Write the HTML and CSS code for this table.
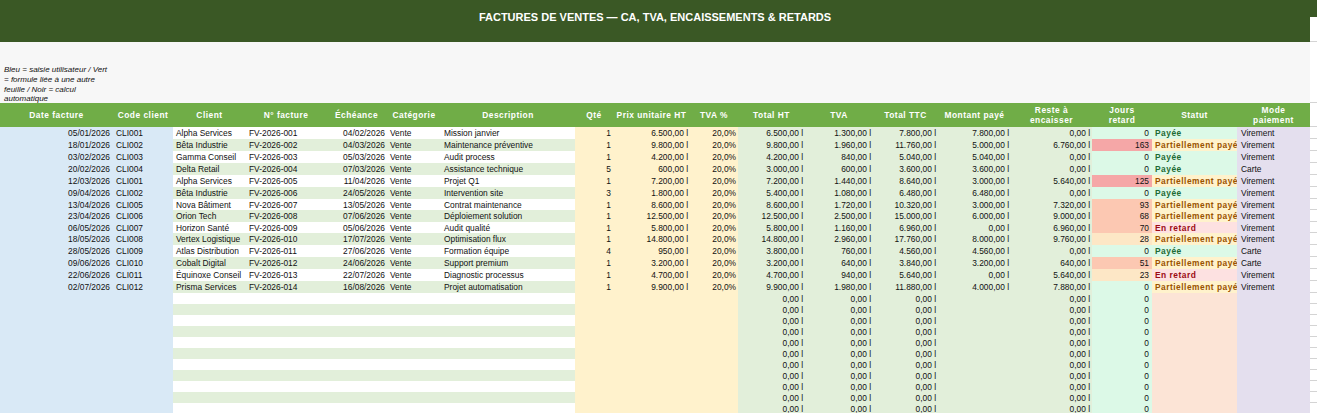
FILE: index.html
```html
<!DOCTYPE html>
<html lang="fr">
<head>
<meta charset="utf-8">
<title>Factures de ventes</title>
<link rel="stylesheet" href="styles.css">
</head>
<body>
<div class="sheet">
  <div class="toprow">
    <div class="banner">FACTURES DE VENTES — CA, TVA, ENCAISSEMENTS &amp; RETARDS</div>
    <div class="gutter gutter-top"></div>
  </div>
  <div class="legendrow">
    <div class="legend"><p class="legend-text">Bleu = saisie utilisateur / Vert = formule liée à une autre feuille / Noir = calcul automatique</p></div>
    <div class="gutter gutter-legend"></div>
  </div>
  <table class="grid">
    <colgroup>
      <col style="width:113px"><col style="width:60px"><col style="width:73px"><col style="width:80px">
      <col style="width:61px"><col style="width:54px"><col style="width:134px"><col style="width:38px">
      <col style="width:77px"><col style="width:48px"><col style="width:67px"><col style="width:68px">
      <col style="width:65px"><col style="width:73px"><col style="width:81px"><col style="width:60px">
      <col style="width:85px"><col style="width:73px"><col style="width:7px">
    </colgroup>
    <thead>
      <tr class="head">
        <th>Date facture</th><th>Code client</th><th>Client</th><th>N° facture</th><th>Échéance</th><th>Catégorie</th>
        <th>Description</th><th>Qté</th><th>Prix unitaire HT</th><th>TVA %</th><th>Total HT</th><th>TVA</th>
        <th>Total TTC</th><th>Montant payé</th><th>Reste à<br>encaisser</th><th>Jours<br>retard</th><th>Statut</th>
        <th>Mode<br>paiement</th><th class="gut"></th>
      </tr>
    </thead>
    <tbody id="rows"></tbody>
  </table>
</div>
<script src="app.js"></script>
</body>
</html>
```
FILE: app.js
```js
const data = [
  ["05/01/2026","CLI001","Alpha Services","FV-2026-001","04/02/2026","Mission janvier","1","6.500,00 l","6.500,00 l","1.300,00 l","7.800,00 l","7.800,00 l","0,00 l","0","paid","Virement"],
  ["18/01/2026","CLI002","Bêta Industrie","FV-2026-002","04/03/2026","Maintenance préventive","1","9.800,00 l","9.800,00 l","1.960,00 l","11.760,00 l","5.000,00 l","6.760,00 l","163","part","Virement"],
  ["03/02/2026","CLI003","Gamma Conseil","FV-2026-003","05/03/2026","Audit process","1","4.200,00 l","4.200,00 l","840,00 l","5.040,00 l","5.040,00 l","0,00 l","0","paid","Virement"],
  ["20/02/2026","CLI004","Delta Retail","FV-2026-004","07/03/2026","Assistance technique","5","600,00 l","3.000,00 l","600,00 l","3.600,00 l","3.600,00 l","0,00 l","0","paid","Carte"],
  ["12/03/2026","CLI001","Alpha Services","FV-2026-005","11/04/2026","Projet Q1","1","7.200,00 l","7.200,00 l","1.440,00 l","8.640,00 l","3.000,00 l","5.640,00 l","125","part","Virement"],
  ["09/04/2026","CLI002","Bêta Industrie","FV-2026-006","24/05/2026","Intervention site","3","1.800,00 l","5.400,00 l","1.080,00 l","6.480,00 l","6.480,00 l","0,00 l","0","paid","Virement"],
  ["13/04/2026","CLI005","Nova Bâtiment","FV-2026-007","13/05/2026","Contrat maintenance","1","8.600,00 l","8.600,00 l","1.720,00 l","10.320,00 l","3.000,00 l","7.320,00 l","93","part","Virement"],
  ["23/04/2026","CLI006","Orion Tech","FV-2026-008","07/06/2026","Déploiement solution","1","12.500,00 l","12.500,00 l","2.500,00 l","15.000,00 l","6.000,00 l","9.000,00 l","68","part","Virement"],
  ["06/05/2026","CLI007","Horizon Santé","FV-2026-009","05/06/2026","Audit qualité","1","5.800,00 l","5.800,00 l","1.160,00 l","6.960,00 l","0,00 l","6.960,00 l","70","late","Virement"],
  ["18/05/2026","CLI008","Vertex Logistique","FV-2026-010","17/07/2026","Optimisation flux","1","14.800,00 l","14.800,00 l","2.960,00 l","17.760,00 l","8.000,00 l","9.760,00 l","28","part","Virement"],
  ["28/05/2026","CLI009","Atlas Distribution","FV-2026-011","27/06/2026","Formation équipe","4","950,00 l","3.800,00 l","760,00 l","4.560,00 l","4.560,00 l","0,00 l","0","paid","Carte"],
  ["09/06/2026","CLI010","Cobalt Digital","FV-2026-012","24/06/2026","Support premium","1","3.200,00 l","3.200,00 l","640,00 l","3.840,00 l","3.200,00 l","640,00 l","51","part","Carte"],
  ["22/06/2026","CLI011","Équinoxe Conseil","FV-2026-013","22/07/2026","Diagnostic processus","1","4.700,00 l","4.700,00 l","940,00 l","5.640,00 l","0,00 l","5.640,00 l","23","late","Virement"],
  ["02/07/2026","CLI012","Prisma Services","FV-2026-014","16/08/2026","Projet automatisation","1","9.900,00 l","9.900,00 l","1.980,00 l","11.880,00 l","4.000,00 l","7.880,00 l","0","part","Virement"]
];
const labels = { paid: "Payée", part: "Partiellement payé", late: "En retard" };
function daysClass(n) {
  n = Number(n);
  if (n > 120) return "d-high";
  if (n >= 30) return "d-mid";
  if (n > 0) return "d-low";
  return "";
}
const tbody = document.getElementById("rows");
let html = "";
data.forEach((r, i) => {
  const short = (i === 6 || i === 8) ? " short" : "";
  html += `<tr class="row ${i % 2 ? "alt" : ""}${short}">` +
    `<td class="c-in r">${r[0]}</td><td class="c-in">${r[1]}</td>` +
    `<td class="c-st">${r[2]}</td><td class="c-st">${r[3]}</td><td class="c-st r">${r[4]}</td><td class="c-st">Vente</td><td class="c-st">${r[5]}</td>` +
    `<td class="c-y r">${r[6]}</td><td class="c-y r">${r[7]}</td><td class="c-y r">20,0%</td>` +
    `<td class="c-g r">${r[8]}</td><td class="c-g r">${r[9]}</td><td class="c-g r">${r[10]}</td><td class="c-g r">${r[11]}</td><td class="c-g r">${r[12]}</td>` +
    `<td class="c-d r ${daysClass(r[13])}">${r[13]}</td>` +
    `<td class="c-s s-${r[14]}">${labels[r[14]]}</td>` +
    `<td class="c-m">${r[15]}</td><td class="gut"></td></tr>`;
});
for (let i = 0; i < 11; i++) {
  const alt = (data.length + i) % 2 ? "alt" : "";
  html += `<tr class="row empty ${alt}">` +
    `<td class="c-in"></td><td class="c-in"></td>` +
    `<td class="c-st"></td><td class="c-st"></td><td class="c-st"></td><td class="c-st"></td><td class="c-st"></td>` +
    `<td class="c-y"></td><td class="c-y"></td><td class="c-y"></td>` +
    `<td class="c-g r">0,00 l</td><td class="c-g r">0,00 l</td><td class="c-g r">0,00 l</td><td class="c-g"></td><td class="c-g r">0,00 l</td>` +
    `<td class="c-d r">0</td><td class="c-s s-none"></td><td class="c-m"></td><td class="gut"></td></tr>`;
}
tbody.innerHTML = html;
```
FILE: styles.css
```css
html, body {
  margin: 0;
  padding: 0;
  background: #ffffff;
  overflow: hidden;
}
body {
  font-family: "Liberation Sans", Arial, sans-serif;
  color: #111111;
}
.sheet {
  width: 1317px;
}
.toprow, .legendrow {
  display: flex;
}
.banner {
  width: 1310px;
  height: 42px;
  box-sizing: border-box;
  padding-top: 10px;
  background: #3a5825;
  color: #ffffff;
  font-weight: bold;
  font-size: 11px;
  line-height: 14px;
  text-align: center;
}
.gutter {
  flex: 1;
  background: #ffffff;
}
.gutter-top {
  background: linear-gradient(to bottom, #3a5825 0, #3a5825 17px, #ffffff 17px, #ffffff 41px, #d4d4d4 41px);
}
.gutter-legend {
  background: linear-gradient(to top, #d4d4d4 0, #d4d4d4 1px, #ffffff 1px);
}
.legendrow {
  height: 61px;
}
.legend {
  width: 1310px;
  box-sizing: border-box;
  height: 61px;
  padding: 23px 0 0 4px;
  background: #f7f7f7;
}
.legend-text {
  margin: 0;
  width: 108px;
  font-size: 8px;
  line-height: 9.8px;
  font-style: italic;
  color: #111111;
}
.grid {
  table-layout: fixed;
  width: 1317px;
  border-collapse: collapse;
  border-spacing: 0;
}
.grid th, .grid td {
  padding: 0 3px;
  white-space: nowrap;
  overflow: hidden;
  font-size: 8.4px;
}
.head th {
  height: 24px;
  background: #70ad47;
  color: #ffffff;
  font-weight: bold;
  letter-spacing: 0.5px;
  line-height: 10px;
  text-align: center;
  vertical-align: middle;
  padding: 0;
}
.head th.gut {
  background: linear-gradient(to top, #d4d4d4 0, #d4d4d4 1px, #ffffff 1px);
}
.row td {
  box-sizing: border-box;
  height: 12px;
  line-height: 11px;
  vertical-align: middle;
  padding-top: 1px;
  padding-bottom: 0;
}
.row.short td,
.row.empty td {
  height: 11px;
  line-height: 10px;
}
.grid td.r {
  text-align: right;
  padding-right: 2px;
}
.c-in {
  background: #d9e9f6;
}
.grid td.c-in.r {
  padding-right: 3px;
}
.c-st {
  background: #ffffff;
}
.alt .c-st {
  background: #e2efda;
}
.c-y {
  background: #fff2cc;
}
.c-g {
  background: #e2efda;
}
.c-d {
  background: #dcf9e7;
}
.grid td.c-d {
  padding-right: 3px;
}
.c-d.d-high {
  background: #f5a7a7;
}
.c-d.d-mid {
  background: #fcc8b2;
}
.c-d.d-low {
  background: #fde7c6;
}
.c-s {
  font-weight: bold;
  letter-spacing: 0.5px;
}
.s-paid {
  background: #dcf9e7;
  color: #1d6a33;
}
.s-part {
  background: #fff2cc;
  color: #9a5200;
}
.s-late {
  background: #fde1e1;
  color: #9c0a14;
}
.s-none {
  background: #fce4d6;
}
.c-m {
  background: #e4dfee;
}
.grid td.c-m {
  padding-left: 4px;
}
.gut {
  background: linear-gradient(to top, #d4d4d4 0, #d4d4d4 1px, #ffffff 1px);
}
```
